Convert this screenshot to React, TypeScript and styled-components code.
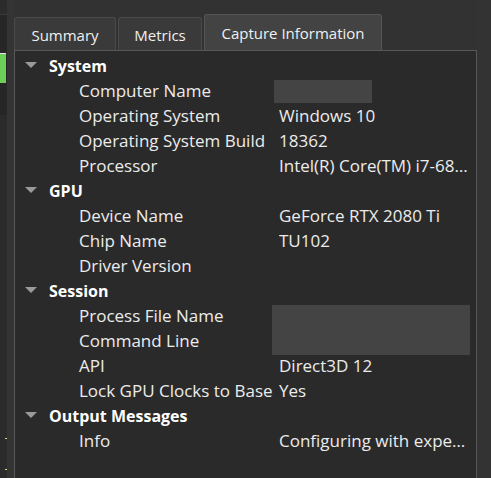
import React from "react";
import styled, { createGlobalStyle } from "styled-components";

const GlobalStyle = createGlobalStyle`
  html, body {
    margin: 0;
    padding: 0;
    background: #323232;
  }
  body {
    font-family: "Open Sans", "Noto Sans", sans-serif;
    color: #eaeaea;
  }
`;

type Row = { label: string; value?: string; redacted?: "short" | "tall" };
type Section = { title: string; rows: Row[] };

const sections: Section[] = [
  {
    title: "System",
    rows: [
      { label: "Computer Name", redacted: "short" },
      { label: "Operating System", value: "Windows 10" },
      { label: "Operating System Build", value: "18362" },
      { label: "Processor", value: "Intel(R) Core(TM) i7-6850K CPU @ 3.60GHz" },
    ],
  },
  {
    title: "GPU",
    rows: [
      { label: "Device Name", value: "GeForce RTX 2080 Ti" },
      { label: "Chip Name", value: "TU102" },
      { label: "Driver Version" },
    ],
  },
  {
    title: "Session",
    rows: [
      { label: "Process File Name", redacted: "tall" },
      { label: "Command Line" },
      { label: "API", value: "Direct3D 12" },
      { label: "Lock GPU Clocks to Base", value: "Yes" },
    ],
  },
  {
    title: "Output Messages",
    rows: [{ label: "Info", value: "Configuring with experimental settings" }],
  },
];

const tabs = [
  { name: "Summary", width: 102 },
  { name: "Metrics", width: 84 },
  { name: "Capture Information", width: 178 },
];

const App: React.FC = () => {
  return (
    <>
      <GlobalStyle />
      <Window>
        <SideStrip>
          <SideTop>
            <GreenBar />
          </SideTop>
          <SideMarks>
            <Mark />
            <Mark />
          </SideMarks>
        </SideStrip>
        <Gutter />
        <Main>
          <TabBar>
            {tabs.map((t, i) => (
              <Tab key={t.name} $active={i === 2} $width={t.width}>
                {t.name}
              </Tab>
            ))}
          </TabBar>
          <Pane>
            {sections.map((s) => (
              <React.Fragment key={s.title}>
                <HeaderRow>
                  <Arrow viewBox="0 0 12 6">
                    <polygon points="0,0 12,0 6,6" fill="#9a9a9a" />
                  </Arrow>
                  <HeaderText>{s.title}</HeaderText>
                </HeaderRow>
                {s.rows.map((r) => (
                  <ItemRow key={r.label}>
                    <Label>{r.label}</Label>
                    <ValueCell>
                      {r.redacted === "short" && <Redact $w={98} $h={23} $left={-5} />}
                      {r.redacted === "tall" && <Redact $w={198} $h={50} $left={-7} />}
                      <ValueText>{r.value}</ValueText>
                    </ValueCell>
                  </ItemRow>
                ))}
              </React.Fragment>
            ))}
          </Pane>
        </Main>
        <RightSpace />
      </Window>
    </>
  );
};

export default App;

// ---------- styled-components ----------

const Window = styled.div`
  width: 491px;
  height: 478px;
  display: flex;
  overflow: hidden;
  background: #323232;
`;

const SideStrip = styled.div`
  width: 7px;
  flex-shrink: 0;
  display: flex;
  flex-direction: column;
  background: #2b2b2b;
`;

const SideTop = styled.div`
  margin-top: 14px;
  height: 101px;
  background: #262626;
  border-top: 1px solid #3c3c3c;
  padding-top: 38px;
  box-sizing: border-box;
`;

const GreenBar = styled.div`
  width: 6px;
  height: 30px;
  background: #6ccf5a;
  border-top: 1px solid #e8e8e8;
  box-sizing: border-box;
`;

const SideMarks = styled.div`
  display: flex;
  flex-direction: column;
  gap: 30px;
  padding-top: 323px;
  align-items: flex-end;
`;

const Mark = styled.div`
  width: 2px;
  height: 1px;
  background: #e6e04a;
`;

const Gutter = styled.div`
  width: 7px;
  flex-shrink: 0;
  background: #343434;
`;

const Main = styled.div`
  width: 463px;
  min-width: 0;
  flex-shrink: 0;
  display: flex;
  flex-direction: column;
`;

const TabBar = styled.div`
  display: flex;
  align-items: flex-end;
  gap: 2px;
  height: 50px;
`;

const Tab = styled.div<{ $active: boolean; $width: number }>`
  width: ${({ $width }) => $width}px;
  height: ${({ $active }) => ($active ? "36px" : "33px")};
  padding-top: ${({ $active }) => ($active ? "0" : "2px")};
  display: flex;
  align-items: center;
  justify-content: center;
  box-sizing: border-box;
  font-size: 15px;
  color: #f0f0f0;
  background: ${({ $active }) => ($active ? "#434343" : "#3a3a3a")};
  border: 1px solid ${({ $active }) => ($active ? "#555555" : "#4a4a4a")};
  border-bottom: none;
  border-radius: 3px 3px 0 0;
  white-space: nowrap;
`;

const Pane = styled.div`
  flex: 1;
  background: #2a2a2a;
  border: 1px solid #585858;
  border-bottom: none;
  padding-top: 2px;
  display: flex;
  flex-direction: column;
  overflow: hidden;
`;

const HeaderRow = styled.div`
  height: 25px;
  flex-shrink: 0;
  display: flex;
  align-items: center;
  padding-left: 10px;
`;

const Arrow = styled.svg`
  width: 12px;
  height: 6px;
  margin-right: 12px;
  margin-top: -2px;
`;

const HeaderText = styled.span`
  font-weight: 700;
  font-size: 16px;
  color: #ffffff;
`;

const ItemRow = styled.div`
  height: 25px;
  flex-shrink: 0;
  display: flex;
  align-items: center;
  padding-left: 64px;
  font-size: 17px;
`;

const Label = styled.div`
  width: 200px;
  white-space: nowrap;
  color: #ececec;
`;

const ValueCell = styled.div`
  position: relative;
  width: 191px;
`;

const ValueText = styled.div`
  position: relative;
  white-space: nowrap;
  overflow: hidden;
  text-overflow: ellipsis;
  color: #ececec;
`;

const Redact = styled.div<{ $w: number; $h: number; $left: number }>`
  position: absolute;
  left: ${({ $left }) => $left}px;
  top: -11px;
  width: ${({ $w }) => $w}px;
  height: ${({ $h }) => $h}px;
  background: #444444;
`;

const RightSpace = styled.div`
  flex: 1;
  background: #333333;
`;
